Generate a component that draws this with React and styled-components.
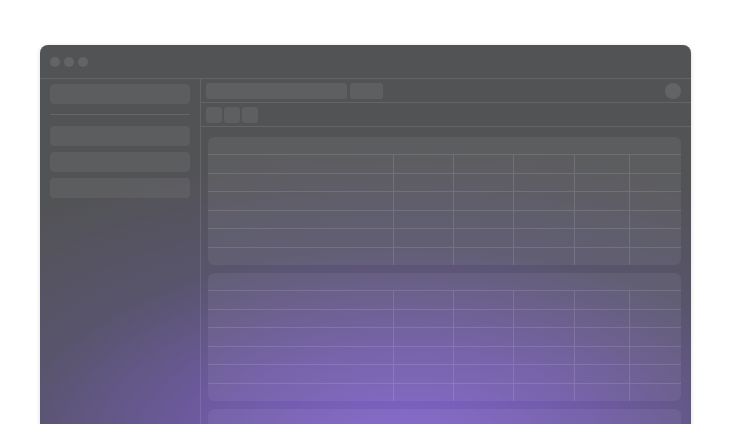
import React from "react";
import styled, { createGlobalStyle } from "styled-components";

const GlobalStyle = createGlobalStyle`
  html, body {
    margin: 0;
    height: 100%;
    overflow: hidden;
    background: #ffffff;
    font-family: "Inter", "Liberation Sans", sans-serif;
  }
`;

const COLS = "185px 60px 60px 61px 55px 1fr";

const Grid = ({ rows = 6 }) => (
  <Card>
    <CardHead />
    {Array.from({ length: rows }).map((_, r) => (
      <Row key={r}>
        {Array.from({ length: 6 }).map((_, c) => (
          <Cell key={c} $first={c === 0} />
        ))}
      </Row>
    ))}
  </Card>
);

const App = () => {
  return (
    <>
      <GlobalStyle />
      <Page>
        <Window>
          <TitleBar>
            <Dot />
            <Dot />
            <Dot />
          </TitleBar>
          <Body>
            <Sidebar>
              <NavItem />
              <Divider />
              <NavItem />
              <NavItem />
              <NavItem />
            </Sidebar>
            <Main>
              <Toolbar>
                <Field $w={141} />
                <Field $w={33} />
                <Avatar />
              </Toolbar>
              <Toolbar>
                <Square />
                <Square />
                <Square />
              </Toolbar>
              <Content>
                <Grid />
                <Grid />
                <Grid />
              </Content>
            </Main>
          </Body>
        </Window>
      </Page>
    </>
  );
};

export default App;

const Page = styled.div`
  padding: 45px 39px 0 40px;
`;

const Window = styled.div`
  width: 651px;
  height: 400px;
  border-radius: 8px;
  overflow: hidden;
  display: flex;
  flex-direction: column;
  box-shadow: 0 1px 5px rgba(0, 0, 0, 0.14);
  background:
    radial-gradient(ellipse 105% 85% at 56% 100%, rgba(130, 100, 205, 1) 0%, rgba(116, 92, 180, 0.85) 28%, rgba(96, 86, 136, 0.45) 58%, rgba(82, 83, 85, 0) 88%),
    #525355;
`;

const TitleBar = styled.div`
  height: 34px;
  flex-shrink: 0;
  display: flex;
  align-items: center;
  gap: 4px;
  padding: 0 10px;
  border-bottom: 1px solid rgba(255, 255, 255, 0.1);
  box-sizing: border-box;
`;

const Dot = styled.div`
  width: 10px;
  height: 10px;
  border-radius: 50%;
  background: rgba(255, 255, 255, 0.1);
`;

const Body = styled.div`
  flex: 1;
  display: grid;
  grid-template-columns: 161px 1fr;
  min-height: 0;
`;

const Sidebar = styled.div`
  border-right: 1px solid rgba(255, 255, 255, 0.1);
  padding: 5px 10px;
  display: flex;
  flex-direction: column;
  gap: 6px;
`;

const NavItem = styled.div`
  height: 20px;
  border-radius: 4px;
  background: rgba(255, 255, 255, 0.06);
`;

const Divider = styled.div`
  height: 1px;
  margin: 4px 0 5px;
  background: rgba(255, 255, 255, 0.12);
`;

const Main = styled.div`
  display: flex;
  flex-direction: column;
  min-width: 0;
`;

const Toolbar = styled.div`
  height: 24px;
  box-sizing: border-box;
  flex-shrink: 0;
  display: flex;
  align-items: center;
  gap: 2px;
  padding: 0 10px 0 5px;
  border-bottom: 1px solid rgba(255, 255, 255, 0.1);
`;

const Field = styled.div`
  width: ${(p) => p.$w}px;
  height: 16px;
  margin-right: 1px;
  border-radius: 3px;
  background: rgba(255, 255, 255, 0.07);
`;

const Avatar = styled.div`
  width: 16px;
  height: 16px;
  margin-left: auto;
  border-radius: 50%;
  background: rgba(255, 255, 255, 0.1);
`;

const Square = styled.div`
  width: 16px;
  height: 16px;
  border-radius: 3px;
  background: rgba(255, 255, 255, 0.07);
`;

const Content = styled.div`
  flex: 1;
  padding: 10px 10px 0 7px;
  display: flex;
  flex-direction: column;
  gap: 8px;
  min-height: 0;
`;

const Card = styled.div`
  height: 128px;
  flex-shrink: 0;
  border-radius: 6px;
  overflow: hidden;
  display: flex;
  flex-direction: column;
  background: rgba(255, 255, 255, 0.06);
`;

const CardHead = styled.div`
  height: 17px;
  flex-shrink: 0;
`;

const Row = styled.div`
  flex: 1;
  display: grid;
  grid-template-columns: ${COLS};
  border-top: 1px solid rgba(255, 255, 255, 0.12);
`;

const Cell = styled.div`
  border-left: ${(p) => (p.$first ? "none" : "1px solid rgba(255, 255, 255, 0.12)")};
`;
